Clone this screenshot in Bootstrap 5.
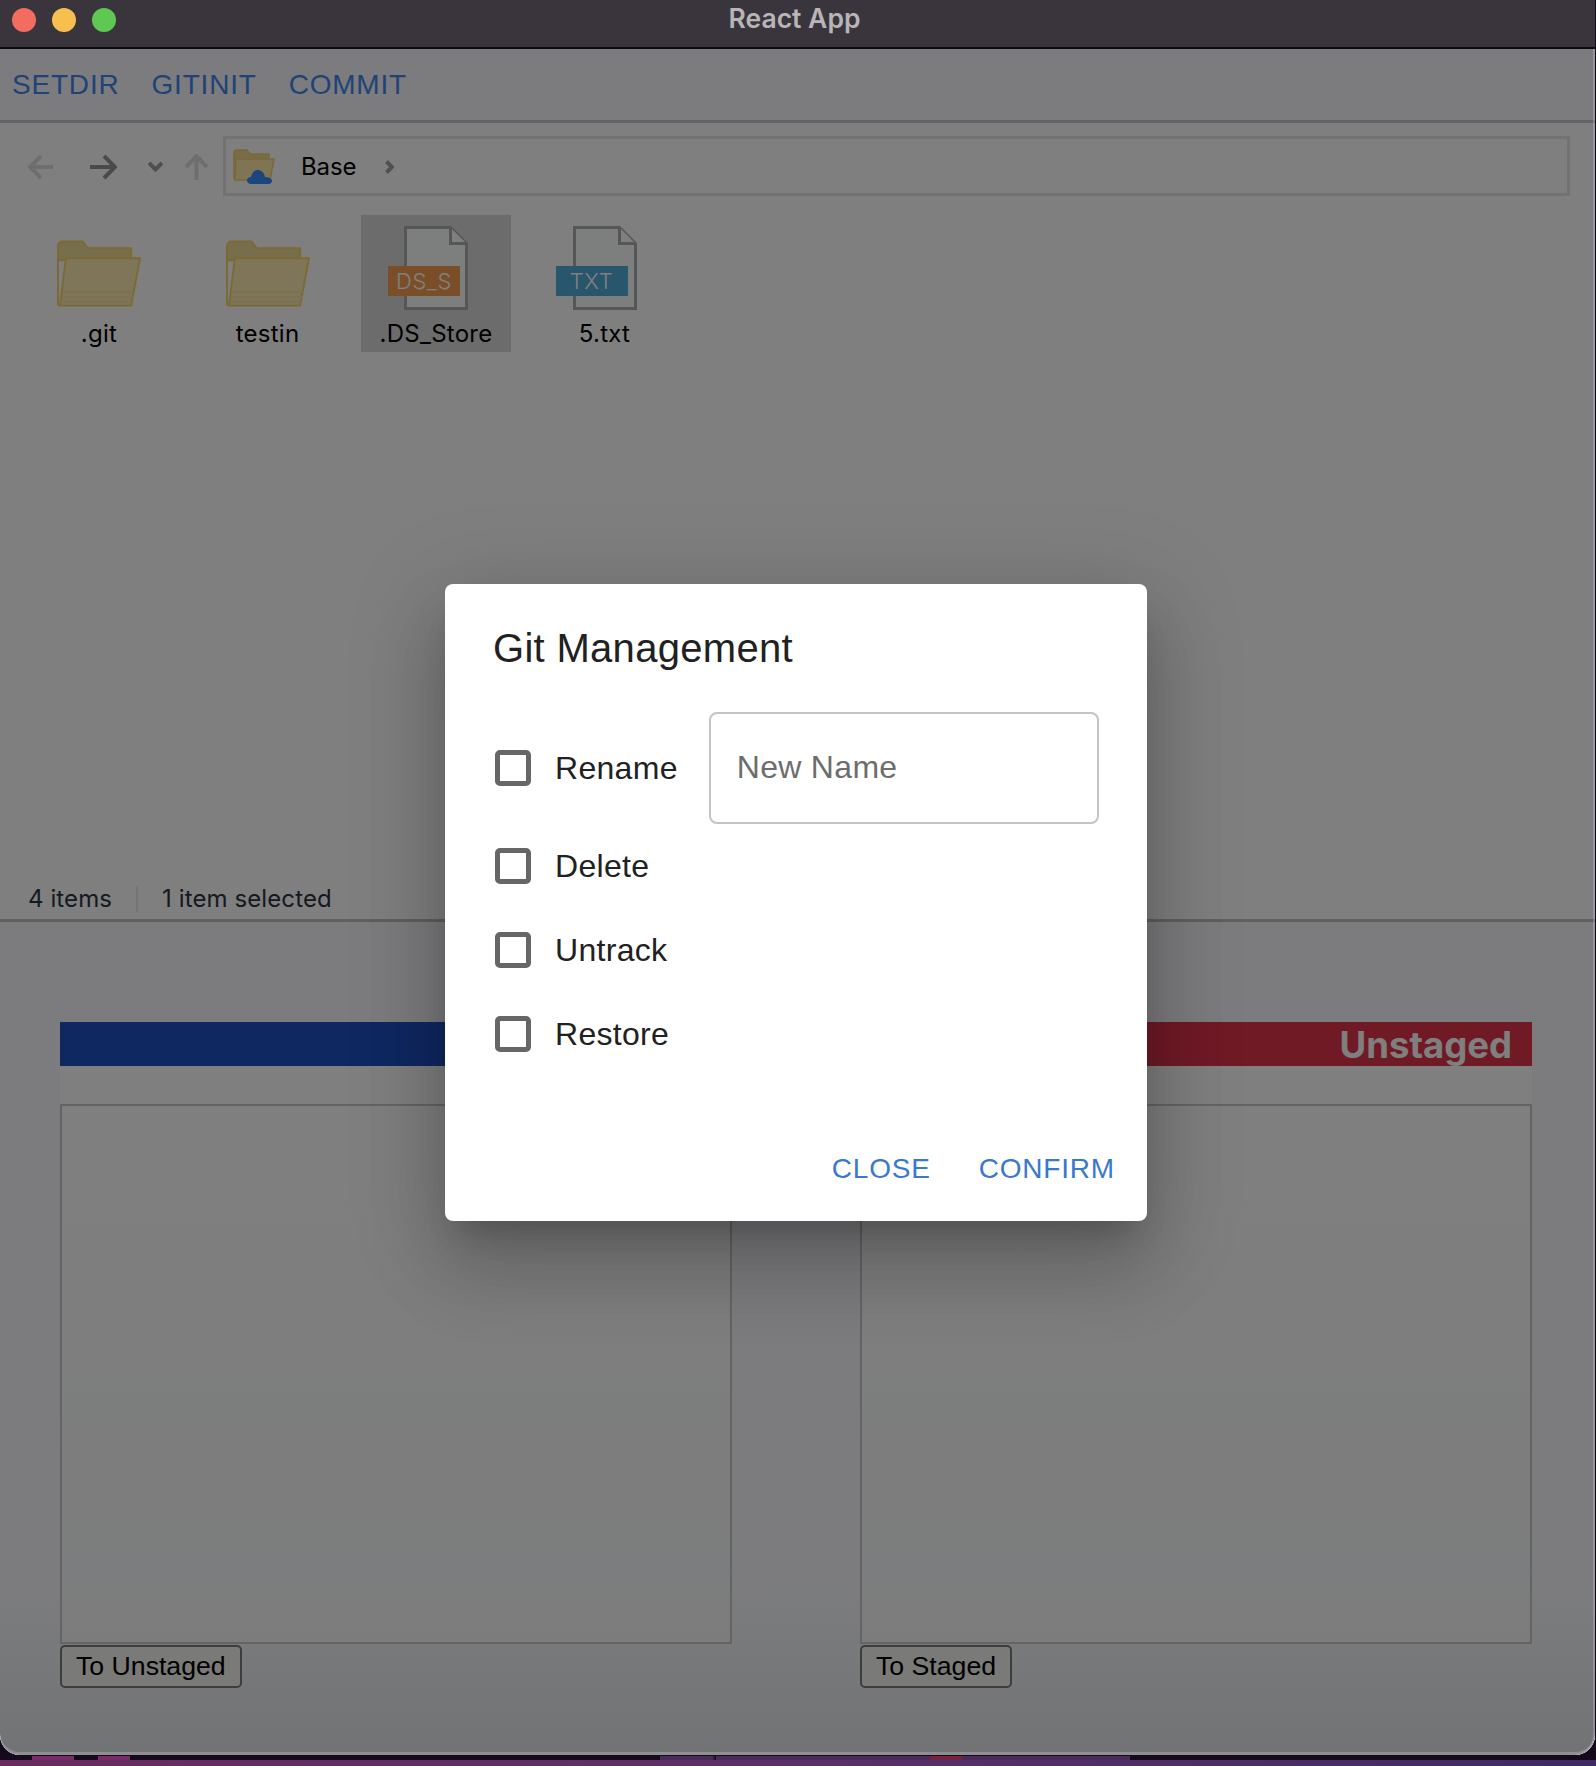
<!doctype html>
<html lang="en">
<head>
<meta charset="utf-8">
<title>React App</title>
<link href="https://cdn.jsdelivr.net/npm/bootstrap@5.3.0/dist/css/bootstrap.min.css" rel="stylesheet">
<style>
html,body{height:1766px;overflow:hidden}
body{font-family:"Liberation Sans",Arial,sans-serif;margin:0;background-color:#140a1c;background-repeat:no-repeat;background-image:linear-gradient(90deg,transparent 32px,#7a2a68 32px,#7a2a68 74px,transparent 74px,transparent 98px,#7a2a68 98px,#7a2a68 130px,transparent 130px,transparent 660px,#4a2a58 660px,#4a2a58 712px,transparent 716px,#4a2a58 716px,#4a2a58 930px,#7a2040 930px,#7a2040 962px,#4a2a58 962px,#4a2a58 1130px,transparent 1130px),linear-gradient(90deg,#6a2a5e 0,#5a3068 50%,#3f2a66 100%);background-size:100% 4px,100% 6px;background-position:0 1756px,0 1760px}
.app-win{width:1595px;height:1755px;border-radius:0 0 20px 20px;overflow:hidden;background:#fff}
.title-bar{height:49px;background:#3a353c;border-bottom:2px solid #0d0b0e;padding-left:12px}
.light{width:24px;height:24px;border-radius:50%;margin-right:16px;margin-top:8px}
.l-r{background:#f26d60}.l-y{background:#f7bf4f}.l-g{background:#5fc853}
.app-title{font-family:Inter,sans-serif;font-weight:600;font-size:26.500px;color:#b7b5b8;left:-6px;right:0;top:0;line-height:36px}
.menu-bar{height:74px;background:#f8f9fd;border-bottom:3px solid #c8c8c8;padding-left:12px;gap:32px}
.menu-btn{font-size:28px;letter-spacing:.8px;color:#3f87ec;padding:0;border:0;line-height:1;text-transform:uppercase;margin-top:1px}
.explorer{height:799px;background:#fff;border-bottom:3px solid #bebebe}
.nav-row{padding:13px 25px 0 28px}
.nav-row>svg{flex:none;margin-top:2px}
.i-back{margin-right:37px}.i-fwd{margin-right:31px}.i-chev{margin-right:22px}.i-up{margin-right:15px}
.addr{width:1347px;height:60px;border:3px solid #e4e4e4;padding:2px 0 0 7px}
.addr-text{font-family:Inter,sans-serif;font-size:24px;color:#000;margin:0 29px 0 26px;letter-spacing:-.1px}
.file-grid{padding:19px 0 0 24px;gap:18.500px}
.file-item{width:150px;height:137px;padding-top:9px}
.file-item.is-sel{background:#d8d8d8}
.ic-box{height:86px}
.folder-ic{margin-bottom:2px}
.ic-tag{position:absolute;top:42px;height:30px;width:72px;font-family:Inter,sans-serif;font-weight:300;font-size:22px;line-height:30px;color:#fff;text-align:center;letter-spacing:.6px}
.tag-ds{left:27px;background:#f49e50}
.tag-txt{left:26px;background:#50acd4}
.file-name{font-family:Inter,sans-serif;font-size:24px;line-height:34px;color:#000;margin-top:7px;letter-spacing:.25px}
.status{height:40px;padding-left:28px;font-family:Inter,sans-serif;font-size:24px;letter-spacing:.1px;color:#2a3442;margin-top:auto}
.status-sep{width:2px;height:26px;background:#e8e8e8;margin:0 24px}
.lower{height:833px;background:linear-gradient(180deg,#f8f9fd 0,#f8f9fd 80%,#e4e6ea 100%);padding:100px 63px 0 60px;gap:128px}
.git-panel{width:672px}
.git-head{height:44px;color:#fff;font-family:Inter,sans-serif;font-weight:700;font-size:36.500px;line-height:46px;text-align:right;padding-right:20px}
.head-blue{background:#1e50c4}.head-red{background:#e0344c}
.git-strip{height:38px;background:#fff}
.git-box{height:540px;border:2px solid #c8c8c8;background:linear-gradient(180deg,#fff 0,#f8f9fb 100%)}
.git-btn{font-size:26.670px;line-height:1;height:43px;padding:0 14px;margin-top:1px;border:2px solid #7a7a7a;border-radius:5px;background:#f4f4f0;color:#000}
.dlg-scrim{top:49px;left:0;right:0;bottom:0;background:rgba(0,0,0,.5);padding:535px 0 0 445px;box-shadow:inset 0 -3px 0 rgba(255,255,255,.2),inset -2px 0 0 rgba(255,255,255,.2);border-radius:0 0 20px 20px}
.dlg{width:702px;height:637px;border:0;border-radius:8px;background:#fff;box-shadow:0 22px 30px -14px rgba(0,0,0,.2),0 48px 76px 6px rgba(0,0,0,.14),0 18px 92px 16px rgba(0,0,0,.12)}
.dlg-title{font-size:40px;line-height:64px;color:#212121;padding:32px 48px 0;letter-spacing:.3px;font-weight:400}
.dlg-body{padding:32px 48px 0 50px}
.opt-row{min-height:84px}
.opt-row.first{min-height:112px}
.form-check-input.opt-check{width:36px;height:36px;margin:0;border:5px solid #666;border-radius:5px;flex:none;background-color:#fff}
.opt-label{font-size:32px;color:#212121;margin-left:24px;letter-spacing:.3px;line-height:1}
.name-input.form-control{width:390px;height:112px;margin-left:31px;border:2px solid #c4c4c4;border-radius:8px;padding:0 26px 2px;font-size:32px;letter-spacing:.3px;color:#212121;box-shadow:none}
.name-input.form-control::placeholder{color:#6d6d6d;opacity:1}
.dlg-actions{padding:0 32px 0 0;margin-top:auto;height:105px;gap:48px}
.act-btn{font-size:28px;letter-spacing:.8px;color:#3a78d0;padding:0;border:0;line-height:1;text-transform:uppercase}
</style>
</head>
<body>
<div class="app-win position-relative">
  <div class="title-bar d-flex position-relative">
    <span class="light l-r"></span><span class="light l-y"></span><span class="light l-g"></span>
    <div class="app-title position-absolute text-center">React App</div>
  </div>
  <div class="menu-bar d-flex align-items-center">
    <button class="btn menu-btn" type="button">Setdir</button>
    <button class="btn menu-btn" type="button">Gitinit</button>
    <button class="btn menu-btn" type="button">Commit</button>
  </div>
  <div class="explorer d-flex flex-column">
    <div class="nav-row d-flex align-items-center">
      <svg class="i-back" width="25" height="26" viewBox="0 0 25 26" fill="none" stroke="#dcdcdc" stroke-width="4"><path d="M25 13H4M13 2 2 13l11 11"/></svg>
      <svg class="i-fwd" width="27" height="26" viewBox="0 0 27 26" fill="none" stroke="#949494" stroke-width="4"><path d="M0 13h24M14 2l11 11-11 11"/></svg>
      <svg class="i-chev" width="15" height="12" viewBox="0 0 15 12" fill="none" stroke="#9e9e9e" stroke-width="4"><path d="M1 2l6.500 6.500L14 2"/></svg>
      <svg class="i-up" width="23" height="26" viewBox="0 0 23 26" fill="none" stroke="#dcdcdc" stroke-width="4"><path d="M11.500 26V3M1 13 11.500 2 22 13"/></svg>
      <div class="addr d-flex align-items-center">
        <svg width="42" height="36" viewBox="0 0 42 36"><path d="M1 30V4q0-3 3-3h10l3 4h19v8H1z" fill="#f5d98c" stroke="#f5cf6e" stroke-width="1.500"/><path d="M3 10h38l-4 21H2z" fill="#ffe9a8" stroke="#f5cf6e" stroke-width="1.500"/><path d="M19 35c-4 0-5-2-5-3.500 0-2 2-3.500 4-3.500 1-5 4-7 7-7s6 2 7 7c3 0 7 1.500 7 3.500 0 2-1 3.500-4 3.500z" fill="#3a8cff"/></svg>
        <span class="addr-text">Base</span>
        <svg width="9" height="14" viewBox="0 0 9 14" fill="none" stroke="#a0a0a0" stroke-width="4"><path d="M1.500 1.500 7 7l-5.500 5.500"/></svg>
      </div>
    </div>
    <div class="file-grid d-flex">
      <div class="file-item">
        <div class="ic-box d-flex justify-content-center align-items-end">
          <svg class="folder-ic" width="84" height="68" viewBox="0 0 85 68"><path d="M1 66V6q0-5 5-5h20l5 7h44v12H1z" fill="#f0dc98" stroke="#f8d468" stroke-width="2"/><path d="M9 18h75l-9 48H3z" fill="#ffeab0" stroke="#f8d468" stroke-width="2"/><path d="M6 52h72M5 57h72M4 62h72" stroke="#f8e4a0" stroke-width="2"/></svg>
        </div>
        <div class="file-name text-center">.git</div>
      </div>
      <div class="file-item">
        <div class="ic-box d-flex justify-content-center align-items-end">
          <svg class="folder-ic" width="84" height="68" viewBox="0 0 85 68"><path d="M1 66V6q0-5 5-5h20l5 7h44v12H1z" fill="#f0dc98" stroke="#f8d468" stroke-width="2"/><path d="M9 18h75l-9 48H3z" fill="#ffeab0" stroke="#f8d468" stroke-width="2"/><path d="M6 52h72M5 57h72M4 62h72" stroke="#f8e4a0" stroke-width="2"/></svg>
        </div>
        <div class="file-name text-center">testin</div>
      </div>
      <div class="file-item is-sel">
        <div class="ic-box position-relative d-flex justify-content-center align-items-end">
          <svg width="64" height="84" viewBox="0 0 64 84"><path d="M1.500 1.500h45l16 16v65h-61z" fill="#f8fefc" stroke="#acacac" stroke-width="3"/><path d="M46.500 1.500v16h16" fill="#fff" stroke="#acacac" stroke-width="3"/></svg>
          <div class="ic-tag tag-ds">DS_S</div>
        </div>
        <div class="file-name text-center">.DS_Store</div>
      </div>
      <div class="file-item">
        <div class="ic-box position-relative d-flex justify-content-center align-items-end">
          <svg width="64" height="84" viewBox="0 0 64 84"><path d="M1.500 1.500h45l16 16v65h-61z" fill="#f8fefc" stroke="#acacac" stroke-width="3"/><path d="M46.500 1.500v16h16" fill="#fff" stroke="#acacac" stroke-width="3"/></svg>
          <div class="ic-tag tag-txt">TXT</div>
        </div>
        <div class="file-name text-center">5.txt</div>
      </div>
    </div>
    <div class="status d-flex align-items-center">
      <span>4 items</span><span class="status-sep"></span><span>1 item selected</span>
    </div>
  </div>
  <div class="lower d-flex">
    <div class="git-panel">
      <div class="git-head head-blue"></div>
      <div class="git-strip"></div>
      <div class="git-box"></div>
      <button class="btn git-btn" type="button">To Unstaged</button>
    </div>
    <div class="git-panel">
      <div class="git-head head-red">Unstaged</div>
      <div class="git-strip"></div>
      <div class="git-box"></div>
      <button class="btn git-btn" type="button">To Staged</button>
    </div>
  </div>
  <div class="dlg-scrim position-absolute">
    <div class="modal-content dlg d-flex flex-column">
      <h2 class="dlg-title m-0">Git Management</h2>
      <div class="dlg-body">
        <div class="opt-row first d-flex align-items-center">
          <input class="form-check-input opt-check" type="checkbox" id="o1">
          <label class="opt-label" for="o1">Rename</label>
          <input class="form-control name-input" type="text" placeholder="New Name">
        </div>
        <div class="opt-row d-flex align-items-center">
          <input class="form-check-input opt-check" type="checkbox" id="o2">
          <label class="opt-label" for="o2">Delete</label>
        </div>
        <div class="opt-row d-flex align-items-center">
          <input class="form-check-input opt-check" type="checkbox" id="o3">
          <label class="opt-label" for="o3">Untrack</label>
        </div>
        <div class="opt-row d-flex align-items-center">
          <input class="form-check-input opt-check" type="checkbox" id="o4">
          <label class="opt-label" for="o4">Restore</label>
        </div>
      </div>
      <div class="dlg-actions d-flex justify-content-end align-items-center">
        <button class="btn act-btn" type="button">Close</button>
        <button class="btn act-btn" type="button">Confirm</button>
      </div>
    </div>
  </div>
</div>
<script src="https://cdn.jsdelivr.net/npm/bootstrap@5.3.0/dist/js/bootstrap.bundle.min.js"></script>
</body>
</html>
